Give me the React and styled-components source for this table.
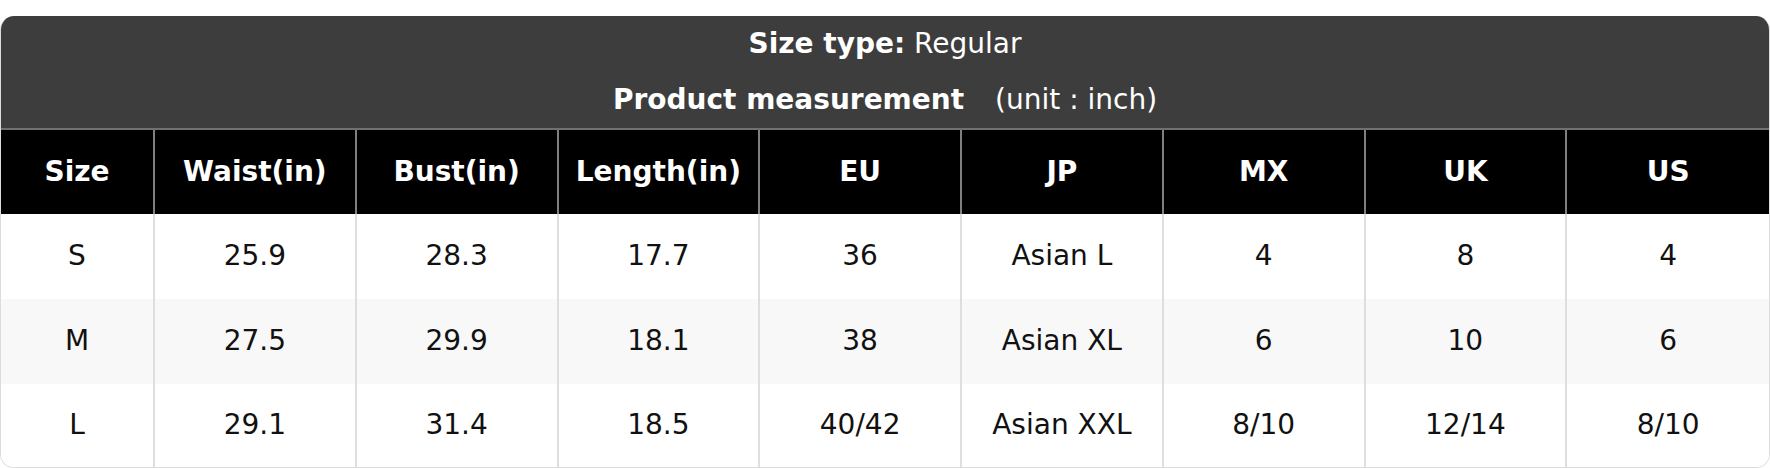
import React from "react";
import styled, { createGlobalStyle } from "styled-components";

const Global = createGlobalStyle`
  html, body { margin: 0; padding: 0; background: #fff; }
  body { font-family: "DejaVu Sans", "Liberation Sans", sans-serif; }
`;

const Page = styled.div`
  padding-top: 16px;
`;

const Card = styled.div`
  width: 1770px;
  box-sizing: border-box;
  border: 1px solid #dcdcdc;
  border-top: none;
  border-radius: 14px;
  overflow: hidden;
  background: #fff;
`;

const Caption = styled.div`
  background: #3d3d3d;
  color: #fff;
  text-align: center;
  font-size: 28px;
  margin: 0 -1px;
`;

const CaptionLine = styled.div`
  height: 56px;
  line-height: 55px;
  white-space: pre;
`;

const Strong = styled.b`
  font-weight: 700;
`;

const Unit = styled.span`
  margin-left: 31px;
`;

const Row = styled.div`
  display: grid;
  grid-template-columns: 154px repeat(8, 1fr);
  height: ${(p) => p.$h || 85}px;
  background: ${(p) => (p.$head ? "#000" : p.$alt ? "#f8f8f8" : "#fff")};
  color: ${(p) => (p.$head ? "#fff" : "#111")};
  font-weight: ${(p) => (p.$head ? 700 : 400)};
  font-size: 28px;
  ${(p) =>
    p.$head &&
    `border-top: 2px solid #707070; border-left: 1px solid #707070; border-right: 1px solid #707070; margin: 0 -1px;`}
`;

const Cell = styled.div`
  display: flex;
  align-items: center;
  justify-content: center;
  padding-bottom: 2px;
  border-right: 2px solid ${(p) => (p.$head ? "#808080" : "#dedede")};
  &:last-child { border-right: none; }
`;

const headers = ["Size", "Waist(in)", "Bust(in)", "Length(in)", "EU", "JP", "MX", "UK", "US"];
const rows = [
  ["S", "25.9", "28.3", "17.7", "36", "Asian L", "4", "8", "4"],
  ["M", "27.5", "29.9", "18.1", "38", "Asian XL", "6", "10", "6"],
  ["L", "29.1", "31.4", "18.5", "40/42", "Asian XXL", "8/10", "12/14", "8/10"],
];

export default function App() {
  return (
    <Page>
      <Global />
      <Card>
        <Caption>
          <CaptionLine>
            <Strong>Size type:</Strong> Regular
          </CaptionLine>
          <CaptionLine>
            <Strong>Product measurement</Strong>
            <Unit>(unit : inch)</Unit>
          </CaptionLine>
        </Caption>
        <Row $head $h={84}>
          {headers.map((h) => (
            <Cell $head key={h}>{h}</Cell>
          ))}
        </Row>
        {rows.map((r, i) => (
          <Row key={r[0]} $alt={i === 1} $h={i === 2 ? 83 : 85}>
            {r.map((c, j) => (
              <Cell key={j}>{c}</Cell>
            ))}
          </Row>
        ))}
      </Card>
    </Page>
  );
}
